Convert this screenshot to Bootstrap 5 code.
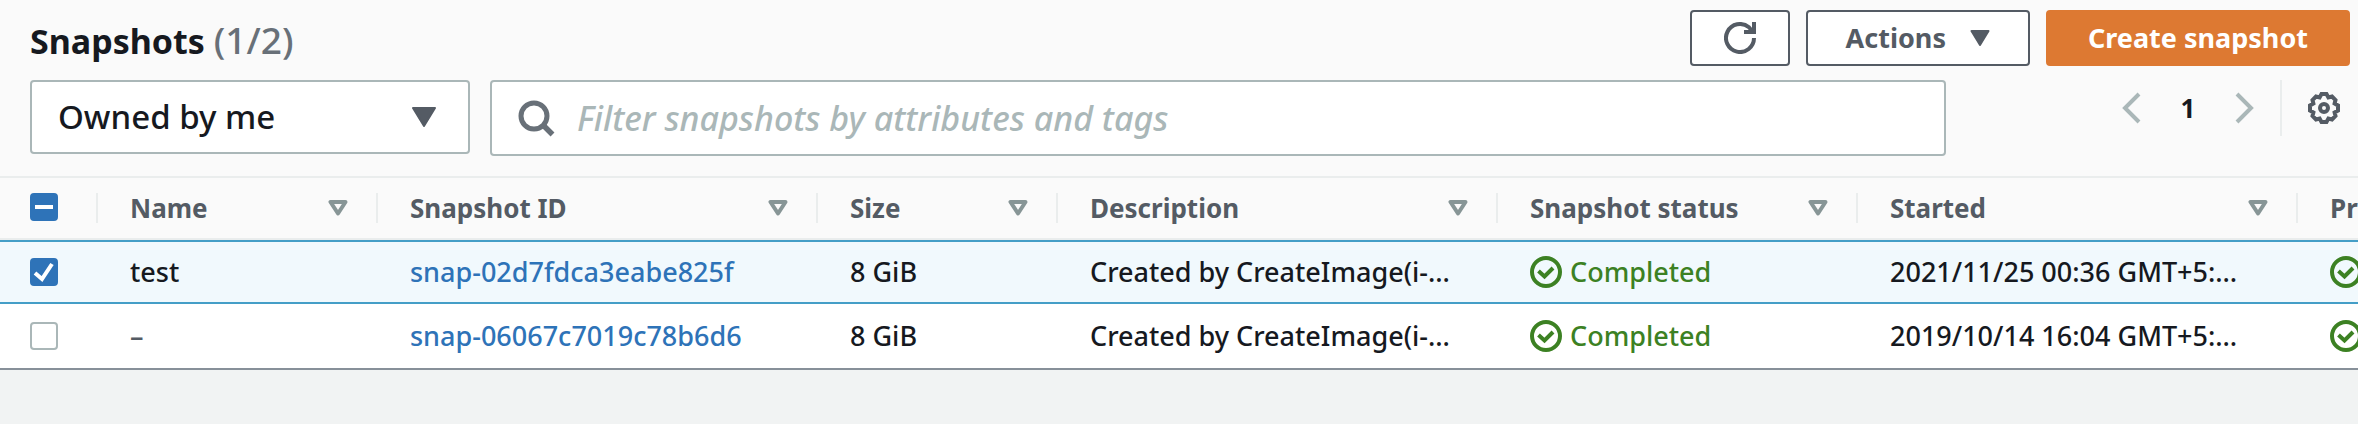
<!DOCTYPE html>
<html lang="en">
<head>
<meta charset="utf-8">
<meta name="viewport" content="width=device-width, initial-scale=1">
<title>Snapshots</title>
<link rel="stylesheet" href="https://cdn.jsdelivr.net/npm/bootstrap@5.3.0/dist/css/bootstrap.min.css">
<style>
  body { background: #f1f3f3; color: #16191f; font-family: "Noto Sans", "Open Sans", sans-serif; font-size: 26px; line-height: 36px; }
  .panel { background: #fafafa; overflow: hidden; box-shadow: 0 1px 1px #b6bcc2; }
  .title { font-size: 34px; line-height: 40px; font-weight: 700; padding-top: 4px; }
  .counter { color: #687078; font-size: 37px; font-weight: 500; }
  .topbar { padding: 10px 8px 0 30px; }
  .filters { padding: 14px 18px 20px 30px; }
  .tool { height: 56px; border: 2px solid #545b64; border-radius: 4px; background: #fff; color: #545b64; font-size: 27px; line-height: 36px; font-weight: 700; padding: 0 38px; }
  .tool-icon { width: 100px; padding: 0; }
  .tool-main { background: #dd7932; border-color: #dd7932; color: #fff; padding: 0 40px; }
  .tool:hover { background: #f2f3f3; border-color: #16191f; color: #16191f; }
  .owner, .search { border: 2px solid #aab7b8; border-radius: 4px; color: #16191f; font-size: 34px; line-height: 40px; font-weight: 500; }
  .owner { appearance: none; width: 440px; height: 74px; padding: 0 60px 0 26px; font-size: 33px; background: #fff url("data:image/svg+xml,%3Csvg xmlns='http://www.w3.org/2000/svg' viewBox='0 0 26 20'%3E%3Cpath d='M2 1h22L13 19z' fill='%23545b64' stroke='%23545b64' stroke-width='2' stroke-linejoin='round'/%3E%3C/svg%3E") no-repeat right 31px center / 26px 20px; }
  .search { height: 76px; padding: 0 24px 0 85px; }
  .search::placeholder { color: #aab7b8; font-style: italic; opacity: 1; }
  .search-icon { left: 31px; top: 19px; }
  .pager { height: 56px; width: 394px; }
  .pager button { border: 0; background: none; padding: 0; display: flex; }
  .page-no { font-weight: 700; width: 92px; text-align: center; }
  .rule { width: 2px; height: 56px; background: #eaeded; margin: 0 26px; }
  .grid { table-layout: fixed; width: 100%; border-collapse: separate; border-spacing: 0; border-top: 2px solid #eaeded; }
  .grid th, .grid td { padding: 0 0 0 32px; white-space: nowrap; overflow: hidden; }
  .grid th:first-child, .grid td:first-child { padding-left: 30px; }
  .grid th { height: 62px; border-bottom: 2px solid #eaeded; color: #545b64; }
  .grid td { height: 66px; background: #fff; border-bottom: 2px solid #879099; font-size: 27px; font-weight: 500; }
  .grid .picked td { height: 64px; background: #f1f9fd; border-top: 2px solid #449ec7; border-bottom-color: #449ec7; }
  .grid .none { color: #545b64; }
  .head { height: 30px; padding-right: 28px; border-right: 2px solid #eaeded; }
  .w-check { width: 98px; } .w-name { width: 280px; } .w-wide { width: 440px; } .w-size { width: 240px; } .w-status { width: 360px; }
  .grid a { color: #2e73b8; text-decoration: none; }
  .ok { color: #3c8123; }
  .tick { appearance: none; display: block; width: 28px; height: 28px; margin: 0; border: 2px solid #aab7b8; border-radius: 4px; background: #fff center / 28px 28px no-repeat; background-origin: border-box; }
  .tick:checked, .tick.part { background-color: #2e73b8; border-color: #2e73b8; }
  .tick:checked { background-image: url("data:image/svg+xml,%3Csvg xmlns='http://www.w3.org/2000/svg' viewBox='0 0 28 28'%3E%3Cpath d='M5 15l7 6L22 6' fill='none' stroke='%23fff' stroke-width='4'/%3E%3C/svg%3E"); }
  .tick.part { background-image: url("data:image/svg+xml,%3Csvg xmlns='http://www.w3.org/2000/svg' viewBox='0 0 28 28'%3E%3Cpath d='M5 14h18' stroke='%23fff' stroke-width='4'/%3E%3C/svg%3E"); }
  svg { display: block; flex: none; }
</style>
</head>
<body>
<svg class="d-none">
  <symbol id="sort" viewBox="0 0 20 16"><path d="M2.500 2h15L10 13.500z" fill="none" stroke="#879596" stroke-width="4" stroke-linejoin="round"/></symbol>
  <symbol id="done" viewBox="0 0 32 32"><circle cx="16" cy="16" r="14" fill="none" stroke="currentColor" stroke-width="4"/><path d="M8.500 15l6 5.500L23 12" fill="none" stroke="currentColor" stroke-width="4"/></symbol>
</svg>
<main class="panel">
  <header class="topbar d-flex align-items-center justify-content-between">
    <h1 class="title m-0">Snapshots <span class="counter">(1/2)</span></h1>
    <div class="d-flex gap-3">
      <button class="tool tool-icon d-flex align-items-center justify-content-center" type="button" aria-label="Refresh">
        <svg width="32" height="32" viewBox="0 0 32 32" fill="none" stroke="currentColor" stroke-width="4"><path d="M30 16a14 14 0 1 1-5-10.700l4 4.700"/><path d="M30 0v10H20"/></svg>
      </button>
      <button class="tool d-flex align-items-center" type="button">Actions
        <svg class="ms-4" width="20" height="16" viewBox="0 0 20 16"><path d="M1.500 1h17L10 15z" fill="currentColor" stroke="currentColor" stroke-width="2" stroke-linejoin="round"/></svg>
      </button>
      <button class="tool tool-main" type="button">Create snapshot</button>
    </div>
  </header>
  <div class="filters d-flex align-items-start">
    <select class="owner" aria-label="Owner"><option>Owned by me</option></select>
    <div class="position-relative flex-grow-1 ms-3 ps-1">
      <svg class="search-icon position-absolute" width="38" height="38" viewBox="0 0 38 38" fill="none" stroke="#687078"><circle cx="17" cy="17" r="13" stroke-width="5"/><path d="M25.500 25.500l10 10" stroke-width="5.500"/></svg>
      <input class="search w-100" type="search" placeholder="Filter snapshots by attributes and tags" aria-label="Filter snapshots">
    </div>
    <nav class="pager d-flex align-items-center justify-content-end" aria-label="Pages">
      <button type="button" aria-label="Previous page"><svg width="20" height="32" viewBox="0 0 20 32"><path d="M17 2L3 16l14 14" fill="none" stroke="#aab7b8" stroke-width="4"/></svg></button>
      <span class="page-no">1</span>
      <button type="button" aria-label="Next page"><svg width="20" height="32" viewBox="0 0 20 32"><path d="M3 2l14 14L3 30" fill="none" stroke="#aab7b8" stroke-width="4"/></svg></button>
      <span class="rule"></span>
      <button type="button" aria-label="Preferences"><svg width="32" height="32" viewBox="0 0 32 32" fill="none" stroke="#545b64" stroke-width="4"><path d="M13.500 2h5l1.900 3.400L24 4.500 27.500 8l-.9 3.600 3.400 1.900v5l-3.400 1.900.9 3.600-3.500 3.500-3.600-.9-1.900 3.400h-5l-1.900-3.400-3.600.9L4.500 24l.9-3.600L2 18.500v-5l3.400-1.900L4.500 8 8 4.500l3.600.9z"/><circle cx="16" cy="16" r="4"/></svg></button>
    </nav>
  </div>
  <table class="grid">
    <colgroup><col class="w-check"><col class="w-name"><col class="w-wide"><col class="w-size"><col class="w-wide"><col class="w-status"><col class="w-wide"><col></colgroup>
    <thead>
      <tr>
        <th scope="col"><div class="head"><input class="tick part" type="checkbox" aria-label="Select all"></div></th>
        <th scope="col"><div class="head d-flex align-items-center justify-content-between">Name <svg width="20" height="16"><use href="#sort"/></svg></div></th>
        <th scope="col"><div class="head d-flex align-items-center justify-content-between">Snapshot ID <svg width="20" height="16"><use href="#sort"/></svg></div></th>
        <th scope="col"><div class="head d-flex align-items-center justify-content-between">Size <svg width="20" height="16"><use href="#sort"/></svg></div></th>
        <th scope="col"><div class="head d-flex align-items-center justify-content-between">Description <svg width="20" height="16"><use href="#sort"/></svg></div></th>
        <th scope="col"><div class="head d-flex align-items-center justify-content-between">Snapshot status <svg width="20" height="16"><use href="#sort"/></svg></div></th>
        <th scope="col"><div class="head d-flex align-items-center justify-content-between">Started <svg width="20" height="16"><use href="#sort"/></svg></div></th>
        <th scope="col">Pr</th>
      </tr>
    </thead>
    <tbody>
      <tr class="picked">
        <td><input class="tick" type="checkbox" checked aria-label="Select test"></td>
        <td>test</td>
        <td><a href="#">snap-02d7fdca3eabe825f</a></td>
        <td>8 GiB</td>
        <td>Created by CreateImage(i-…</td>
        <td><span class="ok d-flex align-items-center gap-2"><svg width="32" height="32"><use href="#done"/></svg>Completed</span></td>
        <td>2021/11/25 00:36 GMT+5:…</td>
        <td><svg class="ok" width="32" height="32"><use href="#done"/></svg></td>
      </tr>
      <tr>
        <td><input class="tick" type="checkbox" aria-label="Select unnamed snapshot"></td>
        <td class="none">–</td>
        <td><a href="#">snap-06067c7019c78b6d6</a></td>
        <td>8 GiB</td>
        <td>Created by CreateImage(i-…</td>
        <td><span class="ok d-flex align-items-center gap-2"><svg width="32" height="32"><use href="#done"/></svg>Completed</span></td>
        <td>2019/10/14 16:04 GMT+5:…</td>
        <td><svg class="ok" width="32" height="32"><use href="#done"/></svg></td>
      </tr>
    </tbody>
  </table>
</main>
<script src="https://cdn.jsdelivr.net/npm/bootstrap@5.3.0/dist/js/bootstrap.bundle.min.js"></script>
</body>
</html>
